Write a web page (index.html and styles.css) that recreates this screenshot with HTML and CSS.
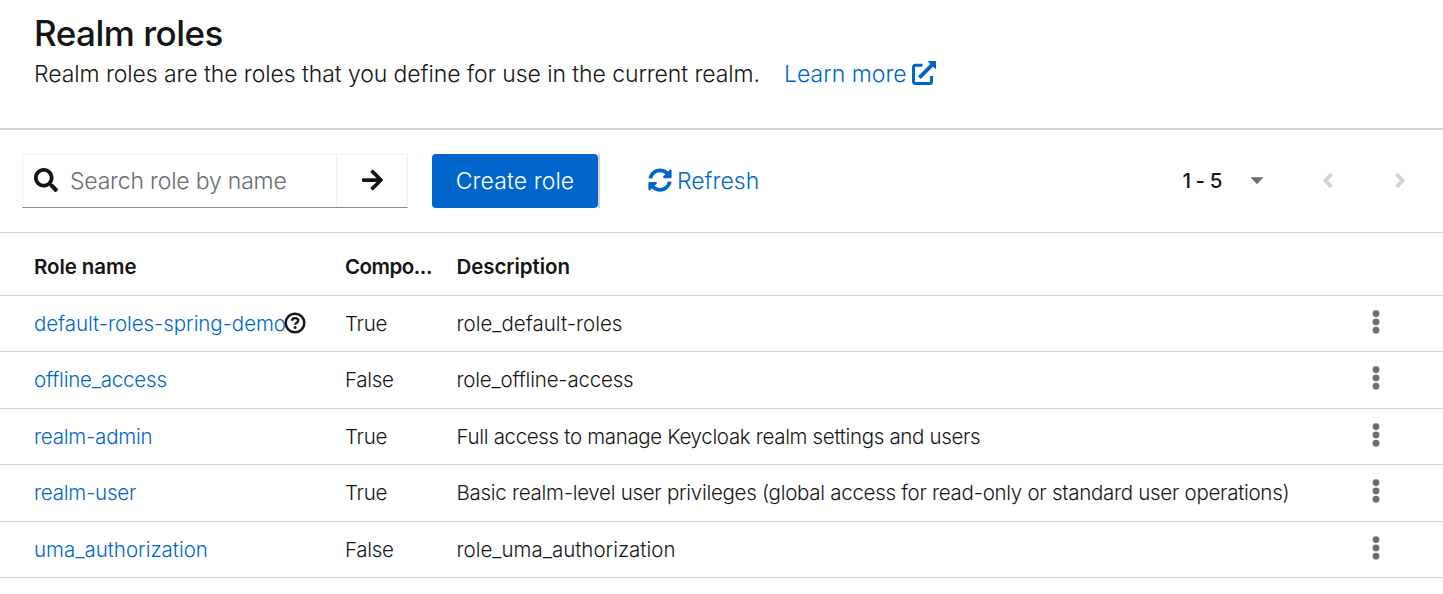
FILE: index.html
```html
<!DOCTYPE html>
<html lang="en">
<head>
<meta charset="utf-8">
<title>Realm roles</title>
<link rel="stylesheet" href="styles.css">
</head>
<body>
<svg class="defs" width="0" height="0" aria-hidden="true">
  <symbol id="kebab" viewBox="0 0 8 24">
    <circle cx="4" cy="3.6" r="3.4"/><circle cx="4" cy="11.9" r="3.4"/><circle cx="4" cy="20.2" r="3.4"/>
  </symbol>
</svg>
<header class="page-header">
  <h1 class="page-title">Realm roles</h1>
  <p class="page-intro">
    <span class="intro-text">Realm roles are the roles that you define for use in the current realm.</span>
    <a class="link learn-more">Learn more
      <svg width="24" height="24" viewBox="0 0 24 24"><path d="M10.5 4.2H3.2a1.7 1.7 0 0 0-1.7 1.7v14.9a1.7 1.7 0 0 0 1.7 1.7H18a1.5 1.5 0 0 0 1.5-1.5V15" fill="none" stroke="currentColor" stroke-width="3"/><path d="M15.5 0H24v8.3l-3-2.6L8.700 18 6 15.300 18.300 3z" fill="currentColor"/></svg>
    </a>
  </p>
</header>
<section class="toolbar">
  <div class="search">
    <div class="search-field">
      <svg width="24" height="24" viewBox="0 0 512 512"><path fill="currentColor" d="M505 442.7L405.3 343c-4.500-4.500-10.600-7-17-7H372c27.600-35.300 44-79.700 44-128C416 93.100 322.900 0 208 0S0 93.100 0 208s93.100 208 208 208c48.300 0 92.700-16.400 128-44v16.300c0 6.400 2.500 12.500 7 17l99.700 99.700c9.400 9.400 24.600 9.400 33.900 0l28.300-28.300c9.400-9.400 9.400-24.600.1-34zM208 336c-70.700 0-128-57.200-128-128 0-70.700 57.200-128 128-128 70.700 0 128 57.200 128 128 0 70.700-57.200 128-128 128z"/></svg>
      <span class="placeholder">Search role by name</span>
    </div>
    <div class="search-submit">
      <svg width="21" height="24" viewBox="0 0 448 512"><path fill="currentColor" d="M190.500 66.900l22.200-22.200c9.400-9.400 24.600-9.400 33.900 0L441 239c9.400 9.400 9.400 24.600 0 33.900L246.600 467.300c-9.400 9.400-24.600 9.400-33.900 0l-22.200-22.200c-9.500-9.500-9.300-25 .4-34.300L311.400 296H24c-13.300 0-24-10.700-24-24v-32c0-13.300 10.700-24 24-24h287.400L190.900 101.200c-9.800-9.300-10-24.800-.4-34.300z"/></svg>
    </div>
  </div>
  <div class="create-wrap"><div class="create">Create role</div></div>
  <a class="link refresh">
    <svg width="24" height="24" viewBox="0 0 512 512"><path fill="currentColor" d="M370.720 133.280C339.458 104.008 298.888 87.962 255.848 88c-77.458.068-144.328 53.178-162.791 126.850-1.344 5.363-6.122 9.150-11.651 9.150H24.103c-7.498 0-13.194-6.807-11.807-14.176C33.933 94.924 134.813 8 256 8c66.448 0 126.791 26.136 171.315 68.685L463.030 40.970C478.149 25.851 504 36.559 504 57.941V192c0 13.255-10.745 24-24 24H345.941c-21.382 0-32.090-25.851-16.971-40.971l41.750-41.749zM32 296h134.059c21.382 0 32.090 25.851 16.971 40.971l-41.750 41.750c31.262 29.273 71.835 45.319 114.876 45.280 77.418-.070 144.315-53.144 162.787-126.849 1.344-5.363 6.122-9.150 11.651-9.150h57.304c7.498 0 13.194 6.807 11.807 14.176C478.067 417.076 377.187 504 256 504c-66.448 0-126.791-26.136-171.315-68.685L48.970 471.030C33.851 486.149 8 475.441 8 454.059V320c0-13.255 10.745-24 24-24z"/></svg>
    <span>Refresh</span>
  </a>
  <div class="pagination">
    <span class="range">1 - 5</span>
    <svg class="caret" width="14" height="8" viewBox="0 0 14 8"><path d="M.5.3h13L7 7.300z" fill="currentColor"/></svg>
    <svg class="prev" width="12" height="17" viewBox="0 0 12 17"><path d="M9.500 2.200 3.300 8.500l6.200 6.300" fill="none" stroke="currentColor" stroke-width="3.800"/></svg>
    <svg class="next" width="12" height="17" viewBox="0 0 12 17"><path d="M2.500 2.200l6.200 6.300-6.200 6.300" fill="none" stroke="currentColor" stroke-width="3.800"/></svg>
  </div>
</section>
<main class="table">
  <div class="row head"><span>Role name</span><span class="compo">Compo...</span><span>Description</span></div>
  <div class="row">
    <div class="name"><a class="link">default-roles-spring-demo</a><svg width="22" height="22" viewBox="0 0 22 22" fill="none" stroke="#151515"><circle cx="11" cy="11" r="9.300" stroke-width="2.500"/><path d="M7.900 8.700c.3-1.700 1.500-2.500 3.100-2.500 1.900 0 3.200 1 3.200 2.500 0 2.100-3 2-3 4.100" stroke-width="2.300"/><circle cx="11.100" cy="15.600" r="1.500" fill="#151515" stroke="none"/></svg></div>
    <span class="flag">True</span><span>role_default-roles</span><svg class="kebab" width="8" height="24"><use href="#kebab"/></svg>
  </div>
  <div class="row"><a class="link snug">offline_access</a><span class="flag">False</span><span class="snug">role_offline-access</span><svg class="kebab" width="8" height="24"><use href="#kebab"/></svg></div>
  <div class="row"><a class="link snug">realm-admin</a><span class="flag">True</span><span class="tighter">Full access to manage Keycloak realm settings and users</span><svg class="kebab" width="8" height="24"><use href="#kebab"/></svg></div>
  <div class="row"><a class="link snug">realm-user</a><span class="flag">True</span><span class="tight">Basic realm-level user privileges (global access for read-only or standard user operations)</span><svg class="kebab" width="8" height="24"><use href="#kebab"/></svg></div>
  <div class="row"><a class="link">uma_authorization</a><span class="flag">False</span><span>role_uma_authorization</span><svg class="kebab" width="8" height="24"><use href="#kebab"/></svg></div>
</main>
</body>
</html>
```
FILE: styles.css
```css
* { box-sizing: border-box; }
body { margin: 0; background: #fff; color: #151515; font-family: Inter, sans-serif; font-weight: 300; }
svg { display: block; flex: none; }
.defs { position: absolute; }
.link { color: #06c; }

.page-header { height: 130px; padding: 11px 34px 0; border-bottom: 2px solid #d2d2d2; }
.page-title { margin: 0; font-size: 35px; font-weight: 500; line-height: 44px; letter-spacing: -.5px; }
.page-intro { display: flex; margin: 1px 0 0; font-size: 23px; line-height: 36px; }
.intro-text { width: 750px; letter-spacing: -.08px; white-space: nowrap; }
.learn-more { display: flex; align-items: center; gap: 5px; }
.learn-more svg { margin-top: -2px; }

.toolbar { display: flex; align-items: center; height: 103px; padding: 0 37px 0 22px; border-bottom: 1px solid #d2d2d2; font-size: 23px; }
.search { display: flex; width: 386px; height: 54px; border: 1px solid #f0f0f0; border-bottom-color: #8a8d90; }
.search-field { display: flex; align-items: center; gap: 12px; width: 314px; padding-left: 11px; border-right: 1px solid #f0f0f0; }
.search-field svg { margin-top: -2px; }
.placeholder { color: #6a6e73; letter-spacing: -.2px; }
.search-submit { display: grid; flex: 1; place-items: center; }
.search-submit svg { margin-top: -2px; }
.create-wrap { width: 168px; height: 54px; margin-left: 24px; background: linear-gradient(#d2d2d2, #d2d2d2) right / 2px 100% no-repeat; }
.create { display: grid; place-items: center; width: 166px; height: 54px; border-radius: 4px; background: #06c; color: #fff; letter-spacing: .1px; }
.refresh { display: flex; align-items: center; gap: 5px; margin-left: 48px; }
.refresh svg { margin-top: -2px; }
.pagination { display: flex; align-items: center; margin-left: auto; color: #d2d2d2; }
.range { margin-top: -2px; color: #151515; font-size: 20.5px; font-weight: 500; letter-spacing: -.4px; }
.caret { margin-left: 28px; color: #6a6e73; }
.prev { margin: -2px 0 0 58px; }
.next { margin: -2px 0 0 60px; }

.row { display: grid; grid-template-columns: 311px 111.5px 907px auto; align-items: center; justify-content: start; height: 56px; padding-left: 34px; border-bottom: 1px solid #d2d2d2; font-size: 20.5px; white-space: nowrap; }
.row:nth-child(odd) { height: 57px; padding-bottom: 2px; }
.row.head { height: 63px; padding: 5px 0 0 34px; font-weight: 600; letter-spacing: -.08px; }
.row .compo { letter-spacing: -.5px; }
.name { display: flex; align-items: center; letter-spacing: -.06px; }
.name svg { margin: -2px 0 0 -1.5px; }
.flag { letter-spacing: -.3px; }
.kebab { margin: -3px 0 0 8px; fill: #6a6e73; }
.snug { letter-spacing: -.2px; }
.tight { letter-spacing: -.28px; }
.tighter { letter-spacing: -.33px; }
```
